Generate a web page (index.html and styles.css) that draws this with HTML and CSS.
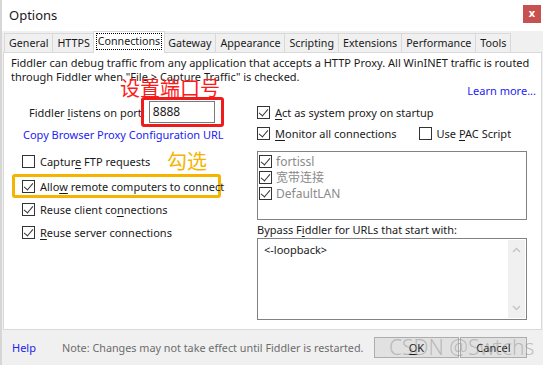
FILE: index.html
```html
<html>
    <head>
        <title>Options</title>
        <link rel="stylesheet" href="styles.css">
    </head>
    <body>
        <div class="window">
            <div class="titlebar">
                <span class="title">Options</span>
                <span class="close">x</span>
            </div>

            <div class="tabs">
                <span class="tab">General</span>
                <span class="tab">HTTPS</span>
                <span class="tab active"><span class="focus">Connections</span></span>
                <span class="tab">Gateway</span>
                <span class="tab">Appearance</span>
                <span class="tab">Scripting</span>
                <span class="tab">Extensions</span>
                <span class="tab">Performance</span>
                <span class="tab">Tools</span>
            </div>

            <div class="panel">
                <p class="intro">Fiddler can debug traffic from any application that accepts a HTTP Proxy. All WinINET traffic is routed<br>through Fiddler when "File &gt; Capture Traffic" is checked.</p>

                <div class="columns">
                    <div class="col-left">
                        <span class="note note-red">设置端口号</span>
                        <span class="note note-orange">勾选</span>

                        <div class="port-row">
                            <span>Fiddler <u>l</u>istens on port:</span>
                            <span class="frame-red"><span class="port">8888</span></span>
                        </div>
                        <a class="link copy">Copy Browser Proxy Configuration URL</a>

                        <div class="check first"><span class="box"></span><span>Captur<u>e</u> FTP requests</span></div>
                        <div class="check framed"><span class="box on"></span><span>Allo<u>w</u> remote computers to connect</span></div>
                        <div class="check"><span class="box on"></span><span>Reuse client co<u>n</u>nections</span></div>
                        <div class="check"><span class="box on"></span><span><u>R</u>euse server connections</span></div>
                    </div>

                    <div class="col-right">
                        <a class="link learn">Learn more...</a>
                        <div class="check act"><span class="box on"></span><span><u>A</u>ct as system proxy on startup</span></div>
                        <div class="check-pair">
                            <div class="check"><span class="box on"></span><span><u>M</u>onitor all connections</span></div>
                            <div class="check"><span class="box"></span><span>Use <u>P</u>AC Script</span></div>
                        </div>
                        <div class="listbox">
                            <div class="item"><span class="box on"></span><span>fortissl</span></div>
                            <div class="item"><span class="box on"></span><span>宽带连接</span></div>
                            <div class="item"><span class="box on"></span><span>DefaultLAN</span></div>
                        </div>
                        <div class="bypass-label">Bypass F<u>i</u>ddler for URLs that start with:</div>
                        <div class="textarea">
                            <span class="text">&lt;-loopback&gt;</span>
                            <div class="scroll">
                                <svg width="9" height="6" viewBox="0 0 9 6"><path d="M1 5 L4.5 1.5 L8 5" fill="none" stroke="#c4c4c4" stroke-width="1.4"/></svg>
                                <svg width="9" height="6" viewBox="0 0 9 6"><path d="M1 1 L4.5 4.5 L8 1" fill="none" stroke="#c4c4c4" stroke-width="1.4"/></svg>
                            </div>
                        </div>
                    </div>
                </div>
            </div>

            <div class="footer">
                <a class="link help">Help</a>
                <span class="restart">Note: Changes may not take effect until Fiddler is restarted.</span>
                <span class="button ok"><u>O</u>K</span>
                <span class="button cancel">Cancel</span>
                <span class="watermark">CSDN @Swtchs</span>
            </div>
        </div>
    </body>
</html>
```

FILE: styles.css
```css
body {
    margin: 0;
    background: #f0f0f0;
    font-family: "Noto Sans", "Noto Sans CJK SC", sans-serif;
    font-size: 11px;
    color: #1a1a1a;
    white-space: nowrap;
}

u {
    text-decoration-thickness: 1px;
    text-underline-offset: 2px;
}

.window {
    width: 543px;
    height: 365px;
    border-left: 2px solid #d6d6d6;
    box-sizing: border-box;
    position: relative;
    overflow: hidden;
}

.titlebar {
    background: #fff;
    height: 31px;
    display: flex;
    align-items: center;
    justify-content: space-between;
}

.title {
    font-size: 13px;
    margin-left: 7px;
    margin-top: -2px;
}

.close {
    background: #c75050;
    color: #fff;
    font-weight: bold;
    font-size: 11px;
    width: 18px;
    height: 18px;
    line-height: 16px;
    text-align: center;
    margin-right: 2px;
    margin-top: -3px;
}

.tabs {
    display: flex;
    align-items: flex-end;
    height: 21px;
    padding-left: 3px;
    position: relative;
    z-index: 1;
    font-size: 10.7px;
}

.tab {
    border: 1px solid #d9d9d9;
    border-bottom: none;
    background: #f0f0f0;
    height: 18px;
    line-height: 18px;
    padding: 0 4px;
    margin-left: -1px;
}

.tab.active {
    background: #fff;
    height: 21px;
    padding: 0 3px;
    margin: 0 -1px -1px -2px;
    position: relative;
}

.focus {
    outline: 1px dotted #000;
    padding: 0 1px;
    display: inline-block;
    line-height: 15px;
    margin-top: 2px;
    vertical-align: top;
}

.panel {
    background: #fff;
    border: 1px solid #d9d9d9;
    margin: 0 1px;
    height: 278px;
    padding: 3px 0 0 7px;
    box-sizing: border-box;
}

.intro {
    margin: 0;
    line-height: 14px;
}

.columns {
    display: flex;
}

.col-left {
    width: 246px;
    position: relative;
}

.col-right {
    width: 270px;
    display: flex;
    flex-direction: column;
}

.link {
    color: #2323f0;
}

.note {
    position: absolute;
    font-size: 20px;
    line-height: 22px;
    font-family: "Noto Sans CJK SC", sans-serif;
}

.note-red {
    color: #ff1a1a;
    left: 109px;
    top: -7px;
}

.note-orange {
    color: #f5b400;
    left: 156px;
    top: 66px;
}

.port-row {
    display: flex;
    align-items: center;
    margin-top: 13px;
    padding-left: 18px;
}

.frame-red {
    border: 3px solid #ee1c1c;
    border-radius: 3px;
    padding: 1px 6px 1px 5px;
    margin-left: -4px;
}

.port {
    display: block;
    width: 61px;
    height: 20px;
    border: 1px solid #7a7a7a;
    line-height: 20px;
    padding-left: 3px;
    font-size: 12px;
}

.copy {
    display: block;
    margin: 1px 0 0 12px;
    line-height: 14px;
}

.check {
    display: flex;
    align-items: center;
    height: 16px;
    margin-top: 7px;
    padding-left: 11px;
}

.check.first {
    margin-top: 11px;
}

.check.framed {
    width: 196px;
    height: 18px;
    margin: 5px 0 0 1px;
    padding-left: 7px;
    border: 3px solid #f5b400;
    border-radius: 3px;
}

.framed + .check {
    margin-top: 3px;
}

.box {
    width: 11px;
    height: 11px;
    border: 1px solid #333;
    margin-right: 5px;
    flex: none;
    position: relative;
    background: #fff;
}

.box.on::after {
    content: "";
    position: absolute;
    left: 3px;
    top: 0;
    width: 4px;
    height: 8px;
    border-right: 1px solid #333;
    border-bottom: 1px solid #333;
    transform: rotate(40deg);
}

.learn {
    align-self: flex-end;
    line-height: 14px;
    margin-right: -9px;
}

.col-right .check {
    padding-left: 0;
}

.act {
    margin-top: 6px;
}

.check-pair {
    display: flex;
    gap: 22px;
    margin-top: 5px;
}

.check-pair .check {
    margin-top: 0;
}

.listbox {
    border: 1px solid #828282;
    height: 66px;
    margin-top: 10px;
    padding: 1px 0 0 1px;
}

.item {
    display: flex;
    align-items: center;
    height: 16px;
    color: #8a8a8a;
    font-size: 12px;
}

.item .box {
    margin-right: 4px;
}

.bypass-label {
    line-height: 14px;
    margin-top: 3px;
}

.textarea {
    border: 1px solid #828282;
    height: 80px;
    margin-top: 1px;
    display: flex;
    justify-content: space-between;
}

.textarea .text {
    margin: 3px 0 0 6px;
}

.scroll {
    width: 17px;
    background: #f0f0f0;
    display: flex;
    flex-direction: column;
    justify-content: space-between;
    align-items: center;
    padding: 7px 0;
    margin: 1px;
}

.footer {
    display: flex;
    align-items: center;
    height: 35px;
    padding-left: 10px;
    position: relative;
}

.help {
    margin-right: 26px;
}

.restart {
    color: #6d6d6d;
    font-size: 10.8px;
    width: 302px;
    margin-right: 10px;
}

.button {
    border: 1px solid #adadad;
    background: #e1e1e1;
    height: 19px;
    line-height: 19px;
    text-align: center;
}

.ok {
    width: 83px;
}

.cancel {
    width: 65px;
    margin-left: 1px;
}

.watermark {
    position: absolute;
    left: 387px;
    top: 3px;
    font-size: 21px;
    font-weight: 300;
    color: rgba(150, 150, 150, 0.55);
}
```
